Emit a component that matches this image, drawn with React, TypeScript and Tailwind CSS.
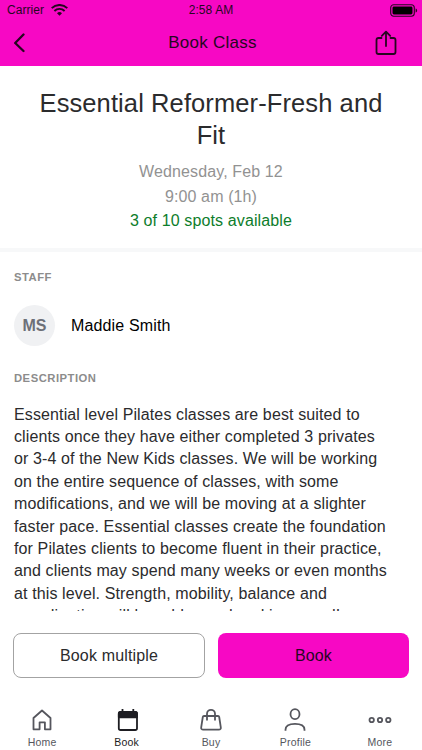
import type { ReactNode } from 'react';

const DESCRIPTION = [
  'Essential level Pilates classes are best suited to',
  'clients once they have either completed 3 privates',
  'or 3-4 of the New Kids classes. We will be working',
  'on the entire sequence of classes, with some',
  'modifications, and we will be moving at a slighter',
  'faster pace. Essential classes create the foundation',
  'for Pilates clients to become fluent in their practice,',
  'and clients may spend many weeks or even months',
  'at this level. Strength, mobility, balance and',
  'coordination will be addressed and improved!',
];

function StatusBar() {
  return (
    <div className="flex h-5 items-center justify-between pl-[7px] pr-1 text-xs">
      <div className="flex flex-1 items-center gap-[7px]">
        <span className="tracking-[0.05px]">Carrier</span>
        <svg width="17" height="12" viewBox="0 0 17 12" fill="none" stroke="currentColor" strokeWidth="1.9">
          <path d="M.7 4.1a11.2 11.2 0 0 1 15.6 0" />
          <path d="M3.4 7a7.3 7.3 0 0 1 10.2 0" />
          <path d="M8.5 11.8 6 9.3a3.6 3.6 0 0 1 5 0z" fill="currentColor" stroke="none" />
        </svg>
      </div>
      <span className="mr-[3px] tracking-[0.1px]">2:58 AM</span>
      <div className="flex flex-1 justify-end">
        <svg width="28" height="13" viewBox="0 0 28 13">
          <rect x=".7" y=".7" width="23.6" height="11.6" rx="3" fill="none" stroke="currentColor" strokeWidth="1.1" />
          <rect x="2.5" y="2.5" width="20" height="8" rx="1.4" fill="black" />
          <path d="M25.6 4.4c2 .7 2 3.5 0 4.2z" fill="currentColor" />
        </svg>
      </div>
    </div>
  );
}

function Header() {
  return (
    <header className="h-[66px] shrink-0 bg-[#f708c4] text-[#26061f]">
      <StatusBar />
      <div className="flex h-[46px] items-center justify-between pl-[13px] pr-[25px]">
        <div className="flex flex-1">
          <svg width="14" height="20" viewBox="0 0 14 20" fill="none" stroke="currentColor" strokeWidth="2.3" strokeLinecap="round" strokeLinejoin="round">
            <path d="M10.5 1.5 2.2 10l8.3 8" />
          </svg>
        </div>
        <h1 className="ml-[15px] text-[17px] tracking-[0.25px]">Book Class</h1>
        <div className="flex flex-1 justify-end">
          <svg width="22" height="26" viewBox="0 0 22 26" fill="none" stroke="currentColor" strokeWidth="1.8" strokeLinecap="round" strokeLinejoin="round">
            <path d="M6.5 8h-3q-2 0-2 2v12q0 2 2 2h15q2 0 2-2V10q0-2-2-2h-3" />
            <path d="M11 16V2M6.8 5.8 11 1.6l4.2 4.2" />
          </svg>
        </div>
      </div>
    </header>
  );
}

function Tab({ label, active, children }: { label: string; active?: boolean; children: ReactNode }) {
  return (
    <button className={active ? 'flex flex-1 flex-col items-center text-[#1d1d22]' : 'flex flex-1 flex-col items-center text-[#55565d]'}>
      <svg width="24" height="24" viewBox="0 0 24 24" fill="none" stroke="currentColor" strokeWidth="1.8" strokeLinejoin="round">
        {children}
      </svg>
      <span className="mt-1 text-[10.5px] leading-3 tracking-[0.2px]">{label}</span>
    </button>
  );
}

function TabBar() {
  return (
    <nav className="flex h-[42px] shrink-0">
      <Tab label="Home">
        <path d="M3.5 10 12 2.5l8.5 7.500v11.300h-5.600v-7H9.600v7H3.500z" />
      </Tab>
      <Tab label="Book" active>
        <path d="M7.500 1v4M18.300 1v4" />
        <path d="M3.800 5.800q0-1.800 1.800-1.800h14.600q1.800 0 1.800 1.800v14.400q0 1.800-1.800 1.800H5.600q-1.800 0-1.800-1.800z" />
        <path d="M3.800 9.300V5.800q0-1.800 1.800-1.800h14.600q1.800 0 1.800 1.800v3.500z" fill="currentColor" />
      </Tab>
      <Tab label="Buy">
        <path d="M5 8h14q1 0 1.200 1l1.600 10.300q.3 2.300-2 2.300H4.200q-2.300 0-2-2.300L3.800 9q.2-1 1.200-1z" />
        <path d="M8 12.500V5.800a4 4 0 0 1 8 0v6.700" />
      </Tab>
      <Tab label="Profile">
        <ellipse cx="12" cy="6.200" rx="4.500" ry="5" />
        <path d="M2.500 22.800v-1q0-6 9.500-6t9.500 6v1" />
      </Tab>
      <Tab label="More">
        <circle cx="3.700" cy="12" r="2.200" />
        <circle cx="12" cy="12" r="2.200" />
        <circle cx="20.300" cy="12" r="2.200" />
      </Tab>
    </nav>
  );
}

export default function App() {
  return (
    <div className="flex h-[750px] w-[422px] flex-col overflow-hidden bg-white font-['Liberation_Sans',Arial,sans-serif] text-[#2b2b2d]">
      <Header />

      <section className="h-[182px] shrink-0 pt-[21px] text-center">
        <h2 className="text-[25.5px] leading-8 tracking-[0.1px]">
          Essential Reformer-Fresh and
          <br />
          Fit
        </h2>
        <div className="mt-[9px] text-base leading-[24.5px] tracking-[0.12px] text-[#929292]">
          <p>Wednesday, Feb 12</p>
          <p>9:00 am (1h)</p>
          <p className="text-[#0d7d2b]">3 of 10 spots available</p>
        </div>
      </section>

      <div className="h-1 shrink-0 bg-[#f7f8f9]" />

      <main className="h-[359px] shrink-0 overflow-hidden px-3.5 pt-[17px]">
        <h3 className="text-[11.25px] leading-4 font-bold tracking-[0.5px] text-[#8c8c8c]">STAFF</h3>
        <div className="mt-5 flex items-center gap-4">
          <div className="flex size-[41px] items-center justify-center rounded-full bg-[#f0f1f3] font-bold text-[#6d7078]">MS</div>
          <span className="text-base tracking-[0.15px] text-black">Maddie Smith</span>
        </div>
        <h3 className="mt-6 text-[11.25px] leading-4 font-bold tracking-[0.5px] text-[#8c8c8c]">DESCRIPTION</h3>
        <p className="mt-[17.5px] text-base leading-[22.4px] tracking-[0.12px] whitespace-nowrap">
          {DESCRIPTION.map((line) => (
            <span key={line} className="block">
              {line}
            </span>
          ))}
        </p>
      </main>

      <div className="mt-[22px] flex h-[45px] shrink-0 gap-[13px] px-[13px] text-base tracking-[0.15px]">
        <button className="w-48 rounded-lg border border-[#a3a3a3]">Book multiple</button>
        <button className="flex-1 rounded-lg bg-[#f708c4] text-[#26061f]">Book</button>
      </div>

      <div className="flex-1" />
      <TabBar />
    </div>
  );
}
